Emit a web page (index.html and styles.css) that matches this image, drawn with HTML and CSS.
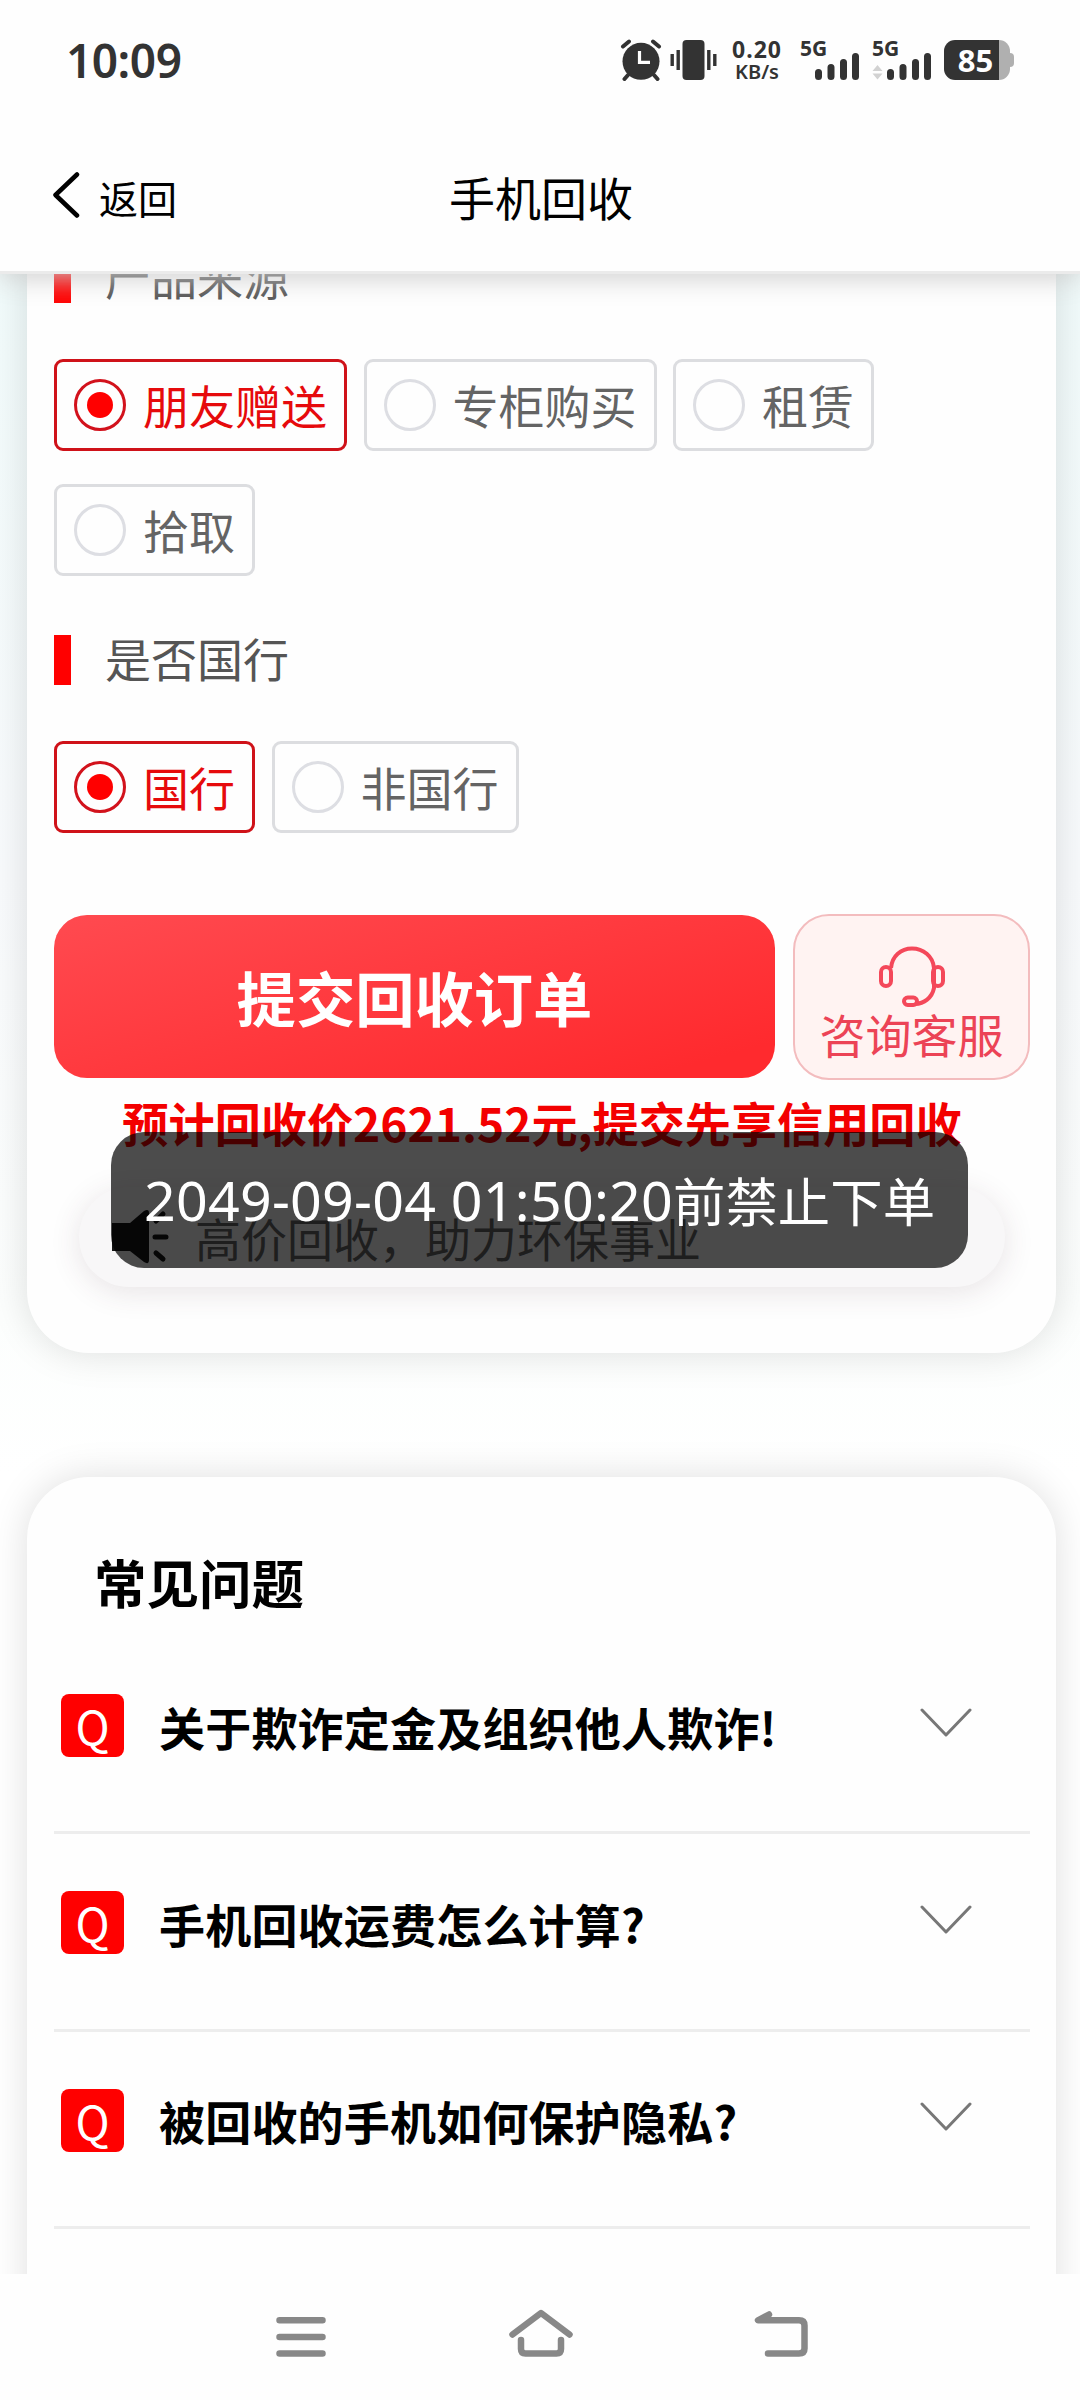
FILE: index.html
```html
<!DOCTYPE html>
<html lang="zh-CN">
<head>
<meta charset="utf-8">
<title>手机回收</title>
<link rel="stylesheet" href="styles.css">
</head>
<body>
<div class="screen">
  <div class="status">
    <span class="time">10:09</span>
    <div class="tray">
      <svg class="alarm" width="42" height="42" viewBox="0 0 42 42">
        <circle cx="21" cy="22.3" r="18.5" fill="#333"/>
        <path d="M3 7.5L9 2.5M39 7.5L33 2.5" stroke="#333" stroke-width="4" stroke-linecap="round"/>
        <path d="M8 36L4.500 40M34 36L37.500 40" stroke="#333" stroke-width="4" stroke-linecap="round"/>
        <path d="M19.500 12V23.300H30" fill="none" stroke="#fff" stroke-width="3.200"/>
      </svg>
      <svg class="vibrate" width="47" height="42" viewBox="0 0 47 42">
        <rect x="12.500" y="1" width="22" height="40" rx="4" fill="#333"/>
        <path d="M8.200 11v20M2.200 15v12M38.800 11v20M44.800 15v12" stroke="#333" stroke-width="3.400"/>
      </svg>
      <div class="speed"><span class="rate">0.20</span><span class="unit">KB/s</span></div>
      <div class="signal">
        <span class="net">5G</span>
        <svg width="60" height="42" viewBox="0 0 60 42">
          <path d="M18.500 33.500v4M31 28.500v9M43.500 23.500v14M55.500 17.500v20" stroke="#333" stroke-width="7" stroke-linecap="round"/>
        </svg>
      </div>
      <div class="signal">
        <span class="net">5G</span>
        <svg width="60" height="42" viewBox="0 0 60 42">
          <path d="M0.500 32L5.500 26L10.500 32zM0.500 34.500L5.500 40.500L10.500 34.500z" fill="#d2d2d2"/>
          <path d="M18.500 33.500v4M31 28.500v9M43.500 23.500v14M55.500 17.500v20" stroke="#333" stroke-width="7" stroke-linecap="round"/>
        </svg>
      </div>
      <div class="battery"><span class="level">85</span></div>
    </div>
  </div>

  <header class="header">
    <div class="back">
      <svg width="28" height="46" viewBox="0 0 28 46"><path d="M25 2.500L3.500 23L25 43.500" fill="none" stroke="#000" stroke-width="4.500" stroke-linecap="round" stroke-linejoin="round"/></svg>
      <span>返回</span>
    </div>
    <h1 class="title">手机回收</h1>
  </header>

  <main class="content">
    <section class="card form">
      <h2 class="label"><span>产品来源</span></h2>
      <div class="options">
        <div class="option on"><i class="radio"></i><span>朋友赠送</span></div>
        <div class="option"><i class="radio"></i><span>专柜购买</span></div>
        <div class="option"><i class="radio"></i><span>租赁</span></div>
        <div class="option"><i class="radio"></i><span>拾取</span></div>
      </div>
      <h2 class="label second"><span>是否国行</span></h2>
      <div class="options">
        <div class="option on"><i class="radio"></i><span>国行</span></div>
        <div class="option"><i class="radio"></i><span>非国行</span></div>
      </div>
      <div class="actions">
        <button class="submit">提交回收订单</button>
        <div class="service">
          <svg width="66" height="62" viewBox="0 0 66 62" fill="none" stroke="#f4485a" stroke-width="4">
            <path d="M12 22C13 10 22 2.500 33 2.500S54 10 55 22V42C53 52 45 57.500 36 58"/>
            <rect x="2" y="21" width="10" height="19" rx="5"/>
            <rect x="54" y="21" width="10" height="19" rx="5"/>
            <rect x="25" y="51.500" width="13" height="7.500" rx="3.700"/>
          </svg>
          <span>咨询客服</span>
        </div>
      </div>
      <p class="estimate">预计回收价2621.52元,提交先享信用回收</p>
      <div class="notice">
        <svg width="58" height="58" viewBox="0 0 58 58">
          <path d="M1 15H19L33 3Q38 0 38 5V52Q38 57 33 54L19 43H1z" fill="#161616"/>
          <path d="M45 13L52 6M44 29H55M45 45L52 51" stroke="#161616" stroke-width="5" stroke-linecap="round"/>
        </svg>
        <span>高价回收，助力环保事业</span>
      </div>
    </section>

    <section class="card faq">
      <h2 class="faq-title">常见问题</h2>
      <div class="item"><b class="q">Q</b><span class="ask">关于欺诈定金及组织他人欺诈!</span><svg class="chev" width="52" height="30" viewBox="0 0 52 30"><path d="M2 2L26 27L50 2"/></svg></div>
      <div class="item"><b class="q">Q</b><span class="ask">手机回收运费怎么计算?</span><svg class="chev" width="52" height="30" viewBox="0 0 52 30"><path d="M2 2L26 27L50 2"/></svg></div>
      <div class="item"><b class="q">Q</b><span class="ask">被回收的手机如何保护隐私?</span><svg class="chev" width="52" height="30" viewBox="0 0 52 30"><path d="M2 2L26 27L50 2"/></svg></div>
      <div class="rest"></div>
    </section>
  </main>

  <nav class="nav">
    <svg width="64" height="52" viewBox="0 0 64 52"><path d="M10.500 12.300H53.500M10.500 29H53.500M10.500 45.500H53.500"/></svg>
    <svg width="64" height="52" viewBox="0 0 64 52"><path d="M3.500 26.500L32 5L60.500 26.500M12 32V41Q12 45.500 16.500 45.500H47.500Q52 45.500 52 41V32"/></svg>
    <svg width="64" height="52" viewBox="0 0 64 52"><path d="M20 6.500L9 12.300H50Q55.500 12.300 55.500 17.500V40.500Q55.500 45.500 50 45.500H19"/></svg>
  </nav>

  <div class="toast"><span class="stamp">2049-09-04 01:50:20</span><span>前禁止下单</span></div>
</div>
</body>
</html>
```
FILE: styles.css
```css
* { box-sizing: border-box; }
body {
  margin: 0;
  background: #fff;
  font-family: "Noto Sans CJK SC", sans-serif;
  font-size: 46px;
  color: #000;
}
svg { display: block; flex: none; }
h1, h2, p { margin: 0; font-weight: 400; font-size: inherit; }

.screen {
  position: relative;
  width: 1080px;
  height: 2400px;
  display: flex;
  flex-direction: column;
  overflow: hidden;
  background: #fdfdfd;
}

/* system status bar */
.status {
  position: relative;
  z-index: 3;
  height: 120px;
  flex: none;
  display: flex;
  justify-content: space-between;
  align-items: center;
  padding: 0 70px 0 66px;
  background: #fefefe;
  color: #333;
  font-family: "Noto Sans", sans-serif;
}
.time { font-size: 46px; font-weight: 600; line-height: 60px; letter-spacing: -0.5px; padding-bottom: 1px; }
.tray { display: flex; align-items: center; height: 42px; }
.vibrate { margin-left: 8px; }
.speed {
  display: flex;
  flex-direction: column;
  align-items: center;
  width: 52px;
  margin-left: 14px;
  font-weight: 700;
}
.rate { font-size: 23px; line-height: 22px; letter-spacing: 1px; }
.unit { font-size: 20px; line-height: 23px; font-weight: 600; }
.signal { position: relative; margin-left: 17px; }
.signal + .signal { margin-left: 12px; }
.net {
  position: absolute;
  left: 0;
  top: -3px;
  font-size: 21px;
  line-height: 24px;
  font-weight: 700;
}
.battery {
  position: relative;
  width: 66px;
  height: 40px;
  margin-left: 12px;
  padding-left: 4px;
  border-radius: 11px;
  background: linear-gradient(90deg, #333 55px, #b0b0b0 55px);
  display: flex;
  align-items: center;
}
.battery::after {
  content: "";
  position: absolute;
  left: 66px;
  top: 13px;
  width: 4px;
  height: 14px;
  border-radius: 0 4px 4px 0;
  background: #b0b0b0;
}
.level { width: 55px; text-align: center; color: #fff; font-size: 31px; font-weight: 700; line-height: 38px; }

/* page header */
.header {
  position: relative;
  z-index: 2;
  height: 154px;
  flex: none;
  display: grid;
  grid-template-columns: 1fr auto 1fr;
  align-items: start;
  padding: 49px 50px 0 52px;
  background: #fefefe;
  border-bottom: 3px solid #ebebeb;
  box-shadow: 0 3px 27px #ccc;
}
.back { display: flex; gap: 19px; align-items: flex-start; padding-top: 3px; }
.back span { font-size: 39px; line-height: 50px; }
.title { line-height: 55px; }

/* scrolled content */
.content {
  flex: 1;
  min-height: 0;
  overflow: hidden;
  padding: 0 24px 0 27px;
  background: linear-gradient(#f1fbfb, #f8fafc 30%, #fcfefd 52%, #fff 60%);
}
.card {
  background: #fefefe;
  border-radius: 62px;
  padding: 0 26px 0 27px;
  box-shadow: 0 0 38px rgba(0, 0, 0, .13);
}
.form { margin-top: -80px; padding-top: 59px; padding-bottom: 66px; }
.label {
  height: 50px;
  display: flex;
  align-items: center;
  gap: 34px;
  color: #555;
}
.label::before { content: ""; width: 17px; height: 50px; background: #f00; }
.label span { line-height: 50px; padding-bottom: 7px; }
.second { margin-top: 59px; }
.options { display: flex; flex-wrap: wrap; gap: 33px 16.500px; margin-top: 56px; }
.option {
  height: 92px;
  display: flex;
  align-items: center;
  gap: 17px;
  padding: 0 17px;
  border: 3px solid #dcdde0;
  border-radius: 9px;
  color: #646464;
}
.option span { line-height: 50px; padding-bottom: 3px; }
.radio {
  width: 52px;
  height: 52px;
  border: 3px solid #dddee3;
  border-radius: 50%;
  display: flex;
  align-items: center;
  justify-content: center;
}
.on { border-color: #cf1219; color: #e60a0c; }
.on .radio { border-color: #d2121c; }
.on .radio::after { content: ""; width: 26px; height: 26px; border-radius: 50%; background: #f00; }

.actions { display: flex; align-items: center; justify-content: space-between; margin-top: 81px; height: 165px; }
.submit {
  width: 721px;
  height: 163px;
  padding: 0 0 2px;
  border: 0;
  border-radius: 33px;
  background: linear-gradient(165deg, #ff4a50, #ff2a2e 90%);
  color: #fff;
  font: 700 59.300px/80px "Noto Sans CJK SC", sans-serif;
}
.service {
  width: 237px;
  height: 166px;
  display: flex;
  flex-direction: column;
  align-items: center;
  padding-top: 30px;
  border: 2px solid #f3bcbe;
  border-radius: 36px;
  background: #fff3f2;
  color: #ec4356;
}
.service span { line-height: 50px; }
.estimate {
  margin-top: 18px;
  line-height: 50px;
  text-align: center;
  white-space: nowrap;
  font-size: 46.150px;
  font-weight: 700;
  color: #f30000;
}
.notice {
  height: 100px;
  margin: 40px 25px 0 25px;
  padding-left: 32px;
  display: flex;
  align-items: center;
  gap: 26px;
  border-radius: 50px;
  background: #f8f7f8;
  box-shadow: 0 5px 30px rgba(80, 50, 60, .13);
  color: #666;
}

/* questions */
.faq { margin-top: 124px; padding-top: 74px; }
.faq-title { padding-left: 40px; font-size: 52.500px; font-weight: 700; line-height: 60px; margin-bottom: 26px; }
.item {
  height: 197.300px;
  display: flex;
  align-items: center;
  padding: 0 58px 17px 7px;
  border-bottom: 3px solid #ededed;
}
.q {
  width: 63px;
  height: 63px;
  border-radius: 8px;
  background: #f00;
  color: #fff;
  font-weight: 400;
  line-height: 62px;
  text-align: center;
}
.ask { flex: 1; margin-left: 35px; font-weight: 700; line-height: 60px; letter-spacing: .200px; }
.chev { margin-top: -6px; fill: none; stroke: #777; stroke-width: 3; stroke-linecap: round; stroke-linejoin: round; }
.rest { height: 140px; }

/* system navigation */
.nav {
  height: 126px;
  flex: none;
  display: flex;
  justify-content: center;
  align-items: flex-start;
  gap: 176px;
  padding: 34px 0 0 1px;
  background: #fefefe;
}
.nav svg { fill: none; stroke: #888; stroke-width: 6.500; stroke-linecap: round; stroke-linejoin: round; }

.toast {
  position: absolute;
  z-index: 3;
  left: 111px;
  top: 1132px;
  width: 857px;
  height: 136px;
  display: flex;
  align-items: center;
  justify-content: center;
  padding-bottom: 2px;
  border-radius: 33px;
  background: rgba(0, 0, 0, .7);
  color: #fff;
  font-size: 52.400px;
  white-space: nowrap;
}
.stamp { font-family: "Noto Sans", sans-serif; font-size: 55.500px; letter-spacing: .250px; }
```
